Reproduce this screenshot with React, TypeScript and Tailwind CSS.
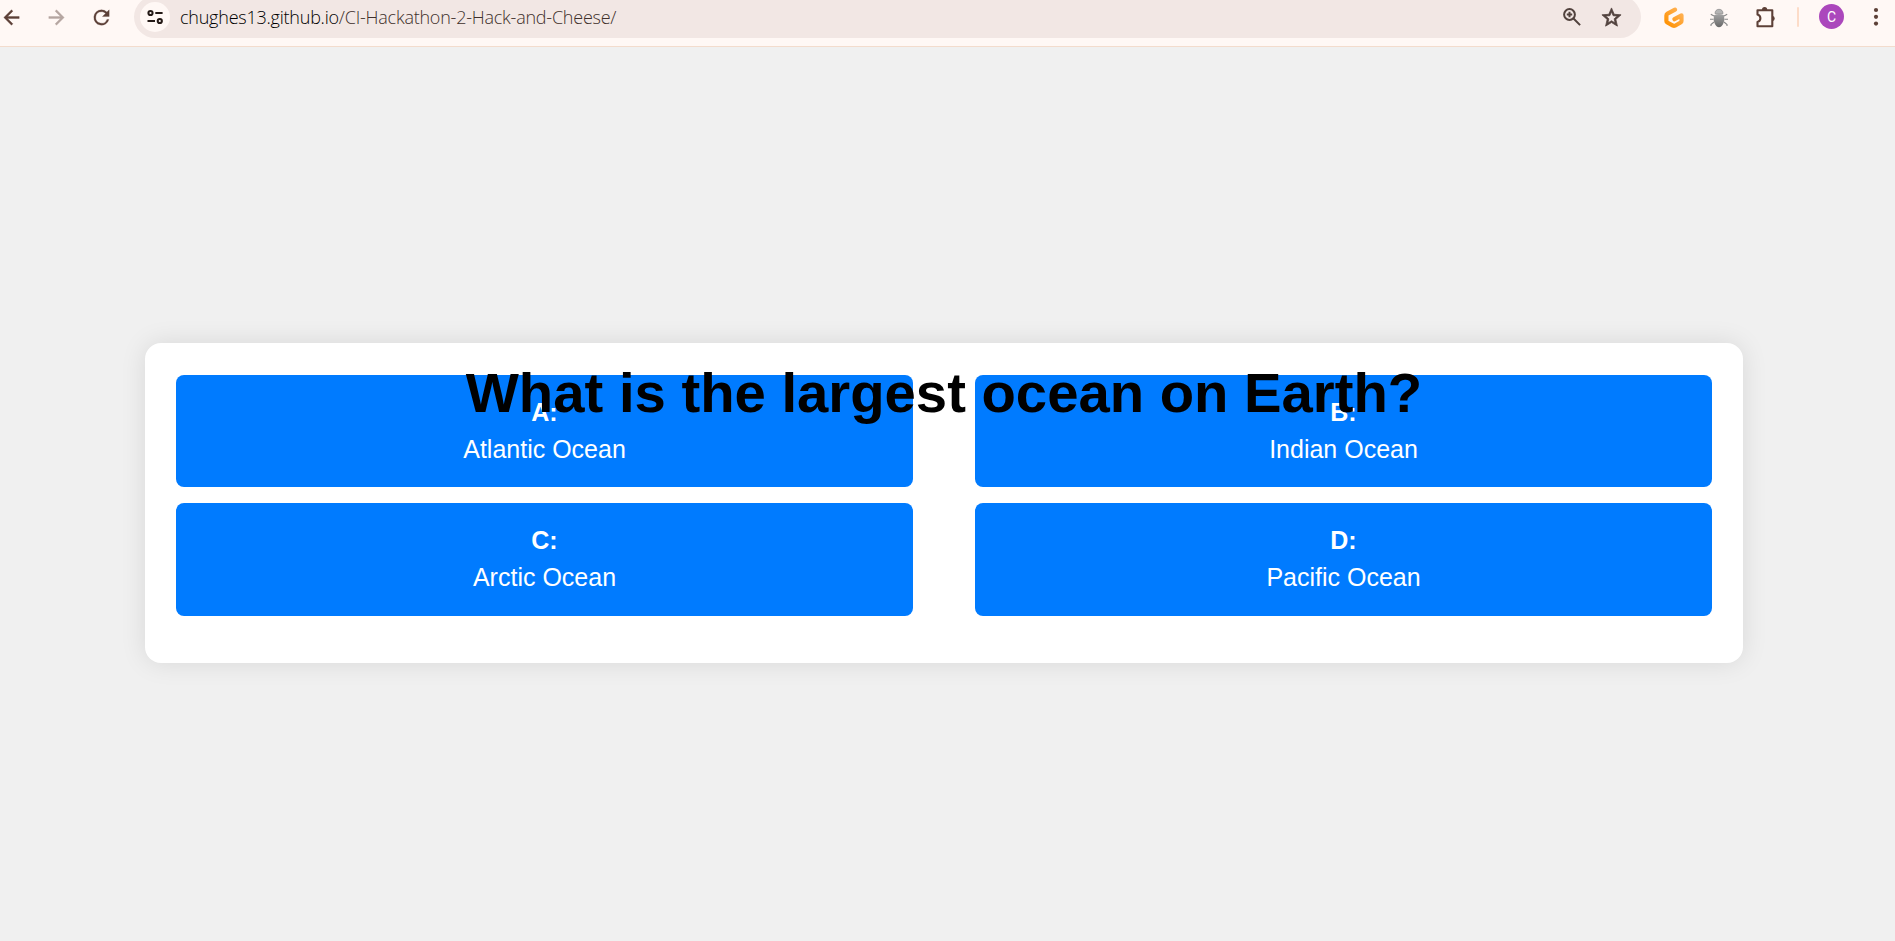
import type { ReactNode } from "react";

const answers = [
  { key: "A:", text: "Atlantic Ocean" },
  { key: "B:", text: "Indian Ocean" },
  { key: "C:", text: "Arctic Ocean" },
  { key: "D:", text: "Pacific Ocean" },
];

function Icon({ size, className, children }: { size: number; className?: string; children: ReactNode }) {
  return (
    <svg width={size} height={size} viewBox="0 0 24 24" fill="currentColor" className={`block shrink-0 ${className ?? ""}`}>
      {children}
    </svg>
  );
}

function Toolbar() {
  return (
    <header className="flex h-[47px] shrink-0 items-start overflow-hidden border-b border-[#f3dccd] bg-[#fff8f5] text-[#5d4037]">
      <div className="flex h-[34px] w-[134px] shrink-0 items-center">
        <Icon size={23}>
          <path d="M20 11H7.83l5.59-5.59L12 4l-8 8 8 8 1.41-1.41L7.83 13H20v-2z" stroke="currentColor" strokeWidth=".4" />
        </Icon>
        <Icon size={23} className="ml-[22px] text-[#b5a6a1]">
          <path d="M12 4l-1.41 1.41L16.17 11H4v2h12.17l-5.58 5.59L12 20l8-8z" stroke="currentColor" strokeWidth=".4" />
        </Icon>
        <Icon size={23} className="ml-[22px]">
          <path d="M17.65 6.35A7.958 7.958 0 0 0 12 4a8 8 0 1 0 7.73 10h-2.08A6 6 0 1 1 12 6c1.66 0 3.14.69 4.22 1.78L13 11h7V4l-2.35 2.35z" stroke="currentColor" strokeWidth=".3" />
        </Icon>
      </div>
      <div className="-mt-1 flex h-[42px] w-[1507px] shrink-0 items-center rounded-full bg-[#f2e7e4] pl-[6px]">
        <span className="flex size-[30px] shrink-0 items-center justify-center rounded-full bg-[#fff8f5] text-[#241a17]">
          <svg width="16" height="16" viewBox="0 0 16 16" fill="none" stroke="currentColor" strokeWidth="2">
            <circle cx="3.5" cy="4" r="2.1" />
            <path d="M8.3 4H15.6M.5 12H8" />
            <circle cx="12.8" cy="12" r="2.1" />
          </svg>
        </span>
        <span className="ml-[10px] grow whitespace-nowrap font-['Open_Sans','Noto_Sans',sans-serif] text-[18px] leading-6 font-light tracking-[-0.23px] text-[#3f302b]">
          <span className="text-black">chughes13.github.io</span>/CI-Hackathon-2-Hack-and-Cheese/
        </span>
        <svg width="18" height="18" viewBox="0 0 18 18" fill="none" stroke="#51423d" strokeWidth="2" className="shrink-0">
          <circle cx="6.5" cy="6.5" r="5.4" />
          <path d="M10.5 10.5l6.6 6.6M3.8 6.5h5.4M6.5 3.8v5.4" />
        </svg>
        <Icon size={23} className="mr-[18px] ml-[19px] text-[#51423d]">
          <path d="M22 9.24l-7.19-.62L12 2 9.19 8.63 2 9.24l5.46 4.73L5.82 21 12 17.27 18.18 21l-1.63-7.03L22 9.24zM12 15.4l-3.76 2.27 1-4.28-3.32-2.88 4.38-.38L12 6.1l1.71 4.04 4.38.38-3.32 2.88 1 4.28L12 15.4z" stroke="currentColor" strokeWidth=".8" />
        </Icon>
      </div>
      <div className="flex h-[34px] shrink-0 items-center">
        <svg width="20" height="22" viewBox="0 0 20 22" fill="none" className="mt-[2px] ml-[23px]">
          <defs>
            <linearGradient id="g-orange" x1="1" y1="0" x2="0" y2="1">
              <stop offset="0" stopColor="#ffb45b" />
              <stop offset="1" stopColor="#ff9100" />
            </linearGradient>
          </defs>
          <path d="M11 2.600L3.500 6.700Q2.400 7.300 2.400 8.400V14Q2.400 15 3.300 15.500L9 18.700Q10 19.200 11 18.700L16.600 15.500Q17.500 15 17.500 14V8.300L10.500 12.200" stroke="url(#g-orange)" strokeWidth="4.200" strokeLinecap="round" strokeLinejoin="round" />
        </svg>
        <svg width="20" height="20" viewBox="0 0 20 20" fill="none" className="mt-[2px] ml-[25px]">
          <defs>
            <linearGradient id="bug-gray" x1="0" y1="0" x2="0" y2="1">
              <stop offset="0" stopColor="#a5a5a5" />
              <stop offset="1" stopColor="#686868" />
            </linearGradient>
          </defs>
          <path d="M5 8L1.8 6.3M4.5 11.2H1M5 14L2 16.5V18M15 8l3.2-1.7M15.5 11.2H19M15 14l3 2.5V18" stroke="#888" strokeWidth="1.1" />
          <path d="M6 5.6C6 2.9 7.5 1.3 10 1.3s4 1.6 4 4.3z" fill="#b4b4b4" stroke="#888" strokeWidth=".7" />
          <path d="M5 7.2Q10 4.8 15 7.2q1 4.8-.6 8Q12.700 19 10 19.200 7.300 19 5.600 15.200 4 12 5 7.200z" fill="url(#bug-gray)" />
        </svg>
        <svg width="22" height="22" viewBox="0 0 22 22" fill="none" className="ml-[26px]">
          <path d="M2.500 4.200H17.300V20.300H2.500V16c1.800-.6 2.900-1.900 2.900-3.700S4.300 9.100 2.500 8.500z" stroke="#5d4037" strokeWidth="2.100" strokeLinejoin="round" />
          <path d="M6.900 4a2.700 2.900 0 0 1 5.400 0zM17.500 9.700a2.800 2.800 0 0 1 0 5.500z" fill="#5d4037" />
        </svg>
        <span className="ml-[20px] h-5 w-[2px] rounded-full bg-[#fddcc8]" />
        <span className="mb-px ml-[20px] flex size-[25px] items-center justify-center rounded-full bg-[#ab47bc] font-[Roboto,sans-serif] text-[14px] leading-none text-white">
          C
        </span>
        <svg width="6" height="20" viewBox="0 0 6 20" fill="currentColor" className="ml-[29px]">
          <circle cx="3" cy="3" r="2.100" />
          <circle cx="3" cy="9.800" r="2.100" />
          <circle cx="3" cy="16.600" r="2.100" />
        </svg>
      </div>
    </header>
  );
}

export default function App() {
  return (
    <div className="flex h-[941px] w-[1895px] flex-col overflow-hidden bg-[#f0f0f0] font-['Liberation_Sans',Arial,sans-serif]">
      <Toolbar />
      <main className="pt-[296px] pl-[145px]">
        <section className="relative h-[320px] w-[1598px] rounded-2xl bg-white px-[31px] pt-8 shadow-[0_0_26px_rgba(0,0,0,0.1)]">
          <div className="grid grid-cols-2 grid-rows-[112px_113px] gap-x-[62px] gap-y-4">
            {answers.map((a) => (
              <button key={a.key} className="flex flex-col items-center rounded-lg bg-[#007bff] pt-[19px] text-[25px] leading-[37px] text-white">
                <strong>{a.key}</strong>
                <span>{a.text}</span>
              </button>
            ))}
          </div>
          <h1 className="absolute inset-x-0 top-[18px] text-center text-[56.25px] leading-[64px] font-bold text-black">
            What is the largest ocean on Earth?
          </h1>
        </section>
      </main>
    </div>
  );
}
